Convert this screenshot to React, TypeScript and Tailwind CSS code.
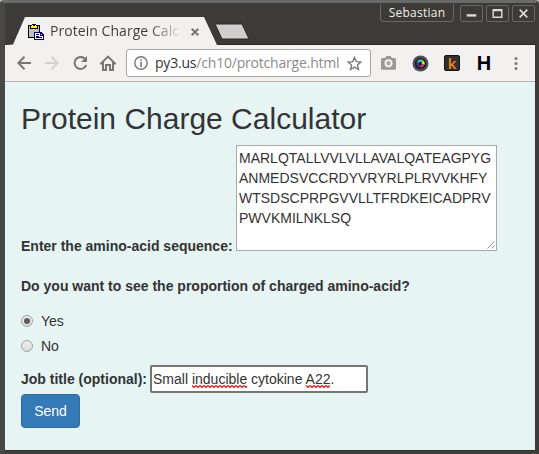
import React from "react";

function TabStrip() {
  return (
    <div className="relative flex h-[45px] items-start border-b border-[#2b2a27] bg-[#3c3b37]">
      <div className="mt-[17px] flex h-[28px] w-[212px] shrink-0 items-center bg-[#f2f1f0] pl-[23px] [clip-path:polygon(0_100%,8px_98%,20px_0,199px_0,212px_100%)]">
        <ClipboardIcon />
        <div className="ml-[6px] w-[133px] overflow-hidden whitespace-nowrap bg-[linear-gradient(to_right,#3c3b37_74%,transparent_100%)] bg-clip-text font-['Open_Sans',sans-serif] text-[14px] leading-[28px] tracking-[0.05px] text-transparent">
          Protein Charge Calc
        </div>
        <svg className="ml-[8px] mt-[1px] size-[8px] shrink-0" viewBox="0 0 8 8" stroke="#777" strokeWidth="2">
          <path d="M.7.7l6.6 6.6M7.3.7L.7 7.3" />
        </svg>
      </div>
      <svg className="-ml-[3px] mt-[23px] h-[18px] w-[36px] shrink-0" viewBox="0 0 36 18">
        <path d="M1 1h27l7 15H8z" fill="#cfcecc" stroke="#292825" />
      </svg>
      <div className="ml-auto flex items-start gap-[3px] pt-[4px]">
        <div className="mr-[3px] h-[18px] w-[74px] rounded-b-[4px] border border-t-0 border-[#696862] text-center font-['Open_Sans',sans-serif] text-[12px] leading-[18px] tracking-[0.25px] text-[#eeeeec]">
          Sebastian
        </div>
        <WindowButton><path d="M6 10.5h10" strokeWidth="2.5" /></WindowButton>
        <WindowButton><path d="M6.5 4.5h9v8h-9zM6 5.5h10" strokeWidth="1.5" /></WindowButton>
        <WindowButton><path d="M7 4.5l8 8M15 4.5l-8 8" strokeWidth="1.7" /></WindowButton>
      </div>
    </div>
  );
}

function WindowButton({ children }: { children: React.ReactNode }) {
  return (
    <button className="mt-[1px] h-[17px] w-[23px] rounded-[2px] border border-[#696862]">
      <svg className="-mt-[1px] h-[17px] w-[21px]" viewBox="0 0 22 17" fill="none" stroke="#dfdbd2">{children}</svg>
    </button>
  );
}

function ClipboardIcon() {
  return (
    <svg className="mt-[2px] size-[16px] shrink-0" viewBox="0 0 16 16" shapeRendering="crispEdges">
      <path d="M0 1h12v13H0z" fill="#000" />
      <path d="M1 2h10v11H1z" fill="#c0c0c0" />
      <path d="M4 0h4v1h2v4H2V1h2z" fill="#000" />
      <path d="M4 1h4v1h1v2H3V2h1z" fill="#ff0" />
      <path d="M5 1h2v1H5z" fill="#000" />
      <path d="M6 8h7l3 3v5H6z" fill="#000080" />
      <path d="M7 9h5v3h3v3H7z" fill="#fff" />
      <path d="M13 10h1v1h-1z" fill="#fff" />
      <path d="M8 10h3v1H8zM8 12h3v1H8zM8 13h6v1H8z" fill="#000080" />
    </svg>
  );
}

function Toolbar() {
  return (
    <div className="flex h-[37px] shrink-0 items-center border-b border-[#b6b4b0] bg-[#f2f1f0] pl-[12px]">
      <svg className="size-[14px] shrink-0" viewBox="0 0 14 14" fill="none" stroke="#777" strokeWidth="2">
        <path d="M14 7H1.5M7.5.7L1.3 7l6.2 6.3" />
      </svg>
      <svg className="ml-[14px] size-[14px] shrink-0" viewBox="0 0 14 14" fill="none" stroke="#d5d4d2" strokeWidth="2">
        <path d="M0 7h12.5M6.5.7L12.7 7l-6.2 6.3" />
      </svg>
      <svg className="ml-[14px] size-[15px] shrink-0" viewBox="0 0 15 15" fill="none">
        <path d="M12.3 3.2A6 6 0 1 0 13.2 9.2" stroke="#777" strokeWidth="2" />
        <path d="M14 0v6H8z" fill="#777" />
      </svg>
      <svg className="ml-[12px] h-[16px] w-[16px] shrink-0" viewBox="0 0 16 16" fill="none" stroke="#777" strokeWidth="2">
        <path d="M1 8.5L8 1.6l7 6.9h-2V15h-3v-5H6v5H3V8.5z" />
      </svg>
      <div className="ml-[10px] flex h-[28px] w-[245px] shrink-0 items-center rounded-[3px] border border-[#aaa8a5] bg-white pl-[7px]">
        <svg className="size-[14px] shrink-0" viewBox="0 0 14 14">
          <circle cx="7" cy="7" r="6.2" fill="none" stroke="#777" strokeWidth="1.4" />
          <path d="M6.2 3.3h1.6v1.5H6.2zM6.2 6h1.6v5H6.2z" fill="#777" />
        </svg>
        <div className="ml-[7px] w-[187px] whitespace-nowrap font-['Open_Sans',sans-serif] text-[14px] leading-[26px] tracking-[-0.2px] text-[#8b8b8b]">
          <span className="text-[#333]">py3.us</span>/ch10/protcharge.html
        </div>
        <svg className="ml-[5px] size-[15px] shrink-0" viewBox="0 0 15 15" fill="none" stroke="#757575" strokeWidth="1.3">
          <path d="M7.5 1.4l1.8 4.2 4.6.4-3.5 3 1.1 4.5-4-2.4-4 2.4 1.1-4.5-3.5-3 4.6-.4z" />
        </svg>
      </div>
      <svg className="ml-[10px] h-[14px] w-[15px] shrink-0" viewBox="0 0 15 14">
        <path d="M1.5 2H4l1.3-2h4.4L11 2h2.5Q15 2 15 3.5v9q0 1.3-1.5 1.3h-12Q0 13.8 0 12.5v-9Q0 2 1.5 2z" fill="#9a9998" />
        <circle cx="7.5" cy="7.3" r="3.1" fill="#aaa" stroke="#f5f5f5" strokeWidth="1.8" />
      </svg>
      <svg className="ml-[16px] size-[17px] shrink-0" viewBox="0 0 17 17">
        <circle cx="8.5" cy="8.5" r="8" fill="#4c5058" />
        <circle cx="8.5" cy="8.5" r="5.6" fill="#16141c" />
        <path d="M8.5 8.5L4.5 7A4.3 4.3 0 0 1 8 4.2z" fill="#26a8e0" />
        <path d="M8.5 8.5L8 4.2A4.3 4.3 0 0 1 12 6z" fill="#36dc65" />
        <path d="M8.5 8.5L12 6a4.3 4.3 0 0 1 .4 4z" fill="#f4e52b" />
        <path d="M8.5 8.5l3.9 1.5a4.3 4.3 0 0 1-3.7 2.8z" fill="#e52c71" />
        <path d="M8.5 8.5l.2 4.3A4.3 4.3 0 0 1 4.5 7z" fill="#612779" />
        <circle cx="8.5" cy="8.5" r="1.5" fill="#111" />
      </svg>
      <div className="ml-[15px] flex h-[16px] w-[16px] shrink-0 items-center justify-center rounded-[2px] border border-[#161616] bg-[#303030] font-['Open_Sans',sans-serif] text-[15px] font-semibold leading-[20px] text-[#f58613]">k</div>
      <div className="ml-[16px] flex w-[16px] shrink-0 justify-center font-['Liberation_Sans',sans-serif] text-[20px] font-bold leading-[20px] text-black">H</div>
      <svg className="ml-[22px] h-[13px] w-[4px] shrink-0" viewBox="0 0 4 13" fill="#777">
        <circle cx="2" cy="1.6" r="1.5" /><circle cx="2" cy="6.5" r="1.5" /><circle cx="2" cy="11.4" r="1.5" />
      </svg>
    </div>
  );
}

function Choice({ label, checked = false }: { label: string; checked?: boolean }) {
  return (
    <label className="flex h-[25px] items-center gap-[8px]">
      <span className="flex size-[12px] items-center justify-center rounded-full border border-[#a2a2a2] bg-linear-to-b from-[#eee] to-[#dcdcdc]">
        {checked && <span className="size-[6px] rounded-full bg-[#5c5c5c]" />}
      </span>
      {label}
    </label>
  );
}

const sequence = [
  "MARLQTALLVVLVLLAVALQATEAGPYG",
  "ANMEDSVCCRDYVRYRLPLRVVKHFY",
  "WTSDSCPRPGVVLLTFRDKEICADPRV",
  "PWVKMILNKLSQ",
];

function Misspelled({ children }: { children: React.ReactNode }) {
  return (
    <span className="relative">
      {children}
      <svg className="absolute left-0 top-[14px] h-[3px] w-full" aria-hidden="true">
        <defs>
          <pattern id="squiggle" width="4" height="3" patternUnits="userSpaceOnUse">
            <path d="M0 .5L2 2.5L4 .5" fill="none" stroke="#f00" strokeWidth="1.1" />
          </pattern>
        </defs>
        <rect width="100%" height="3" fill="url(#squiggle)" />
      </svg>
    </span>
  );
}

export default function App() {
  return (
    <div className="h-[454px] w-[539px] overflow-hidden bg-[#c4c3c2]">
      <div className="flex h-full flex-col overflow-hidden rounded-t-[4px] border-l-[5px] border-r-[4px] border-b-[3px] border-t-[3px] border-b-[#403f3b] border-l-[#484945] border-r-[#3c3b37] border-t-[#686b69] bg-[#e6f4f4]">
        <div className="h-[42px] shrink-0">
          <div className="-mt-[3px]"><TabStrip /></div>
        </div>
        <Toolbar />
        <main className="flex flex-1 flex-col border-b border-[#2d302c] px-[16px] font-['Liberation_Sans',Arial,sans-serif] text-[14px] leading-[20px] text-[#333]">
          <h1 className="mt-[20px] text-[30px] leading-[33px]">Protein Charge Calculator</h1>
          <div className="mt-[10px] flex h-[111px] items-end">
            <span className="w-[215px] shrink-0 whitespace-nowrap font-bold">Enter the amino-acid sequence:</span>
            <div className="relative mb-[5px] h-[106px] w-[261px] border border-[#a9a9a9] bg-white px-[2px] py-[2px]">
              {sequence.map((line) => <div key={line} className="whitespace-nowrap">{line}</div>)}
              <svg className="absolute bottom-[1px] right-[1px] size-[8px]" viewBox="0 0 8 8" stroke="#777" strokeWidth=".8">
                <path d="M.5 7.5l7-7M4.5 7.5l3-3" />
              </svg>
            </div>
          </div>
          <p className="mt-[20px] font-bold">Do you want to see the proportion of charged amino-acid?</p>
          <div className="mt-[12px]">
            <Choice label="Yes" checked />
            <Choice label="No" />
          </div>
          <div className="mt-[7px] flex h-[28px] items-center">
            <span className="w-[129px] shrink-0 whitespace-nowrap font-bold">Job title (optional):</span>
            <div className="h-[28px] w-[218px] whitespace-nowrap rounded-[2px] border-2 border-[#737671] bg-white pl-[1px] leading-[24px]">
              Small <Misspelled>inducible</Misspelled> cytokine <Misspelled>A22</Misspelled>.
            </div>
          </div>
          <button className="mt-[1px] h-[34px] w-[59px] rounded-[4px] border border-[#2e6da4] bg-[#337ab7] text-white">Send</button>
        </main>
      </div>
    </div>
  );
}
